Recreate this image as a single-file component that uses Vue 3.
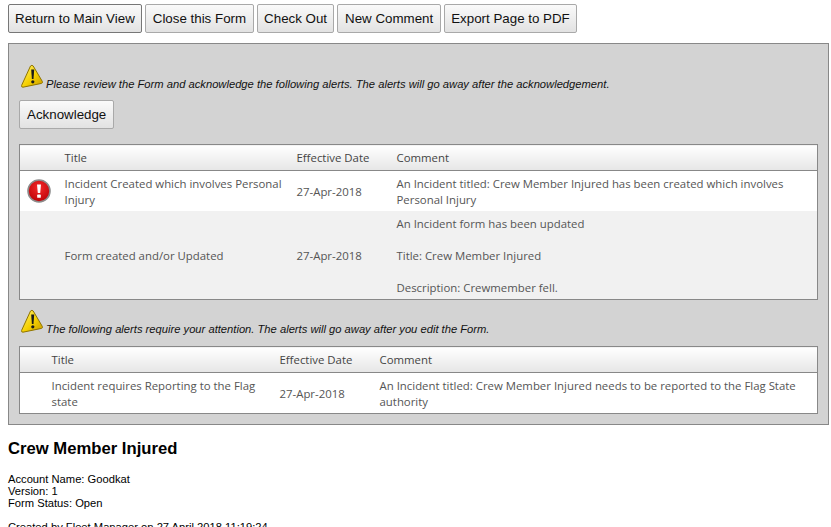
<template>
  <div class="page">
    <div class="toolbar">
      <button class="btn first">Return to Main View</button>
      <button class="btn">Close this Form</button>
      <button class="btn">Check Out</button>
      <button class="btn">New Comment</button>
      <button class="btn">Export Page to PDF</button>
    </div>

    <div class="panel">
      <div class="notice first-notice">
        <svg class="warn" width="24" height="24" viewBox="0 0 24 24">
          <defs>
            <linearGradient id="wg1" x1="0" y1="0" x2="1" y2="1">
              <stop offset="0" stop-color="#fff27a" />
              <stop offset="0.55" stop-color="#f5d000" />
              <stop offset="1" stop-color="#c79a00" />
            </linearGradient>
          </defs>
          <path d="M11.5 2 Q13 0.6 14.2 2 L23.3 17.4 Q24 19 22.5 19.4 L4 23.2 Q2.2 23.4 2.6 21.4Z" fill="url(#wg1)" stroke="#8f7400" stroke-width="1" />
          <path d="M12.2 5.5 L15.2 5.5 L14.5 15 L12.9 15Z" fill="#1a1a1a" />
          <circle cx="13.8" cy="17.8" r="1.6" fill="#1a1a1a" />
        </svg>
        <span> Please review the Form and acknowledge the following alerts. The alerts will go away after the acknowledgement.</span>
      </div>
      <button class="btn ack">Acknowledge</button>

      <table class="grid">
        <colgroup>
          <col style="width: 37px" />
          <col style="width: 232px" />
          <col style="width: 100px" />
          <col />
        </colgroup>
        <thead>
          <tr><th></th><th>Title</th><th>Effective Date</th><th>Comment</th></tr>
        </thead>
        <tbody>
          <tr>
            <td class="icon-cell">
              <svg width="24" height="24" viewBox="0 0 24 24">
                <defs>
                  <radialGradient id="eg1" cx="0.5" cy="0.35" r="0.7">
                    <stop offset="0" stop-color="#f52a2a" />
                    <stop offset="1" stop-color="#b80006" />
                  </radialGradient>
                </defs>
                <circle cx="12" cy="12" r="11" fill="url(#eg1)" stroke="#8c8c8c" stroke-width="1.6" />
                <path d="M10 5.5 L14 5.5 L13.2 14 L10.8 14Z" fill="#fff" />
                <rect x="10.2" y="15.6" width="3.6" height="3.2" rx="0.6" fill="#fff" />
              </svg>
            </td>
            <td>Incident Created which involves Personal Injury</td>
            <td>27-Apr-2018</td>
            <td>An Incident titled: Crew Member Injured has been created which involves Personal Injury</td>
          </tr>
          <tr class="alt">
            <td></td>
            <td>Form created and/or Updated</td>
            <td>27-Apr-2018</td>
            <td>An Incident form has been updated<br /><br />Title: Crew Member Injured<br /><br />Description: Crewmember fell.</td>
          </tr>
        </tbody>
      </table>

      <div class="notice second-notice">
        <svg class="warn" width="24" height="24" viewBox="0 0 24 24">
          <defs>
            <linearGradient id="wg2" x1="0" y1="0" x2="1" y2="1">
              <stop offset="0" stop-color="#fff27a" />
              <stop offset="0.55" stop-color="#f5d000" />
              <stop offset="1" stop-color="#c79a00" />
            </linearGradient>
          </defs>
          <path d="M11.5 2 Q13 0.6 14.2 2 L23.3 17.4 Q24 19 22.5 19.4 L4 23.2 Q2.2 23.4 2.6 21.4Z" fill="url(#wg2)" stroke="#8f7400" stroke-width="1" />
          <path d="M12.2 5.5 L15.2 5.5 L14.5 15 L12.9 15Z" fill="#1a1a1a" />
          <circle cx="13.8" cy="17.8" r="1.6" fill="#1a1a1a" />
        </svg>
        <span> The following alerts require your attention. The alerts will go away after you edit the Form.</span>
      </div>

      <table class="grid">
        <colgroup>
          <col style="width: 24px" />
          <col style="width: 228px" />
          <col style="width: 100px" />
          <col />
        </colgroup>
        <thead>
          <tr><th></th><th>Title</th><th>Effective Date</th><th>Comment</th></tr>
        </thead>
        <tbody>
          <tr>
            <td></td>
            <td>Incident requires Reporting to the Flag state</td>
            <td>27-Apr-2018</td>
            <td>An Incident titled: Crew Member Injured needs to be reported to the Flag State authority</td>
          </tr>
        </tbody>
      </table>
    </div>

    <h2 class="heading">Crew Member Injured</h2>
    <p class="meta">Account Name: Goodkat<br />Version: 1<br />Form Status: Open</p>
    <p class="meta">Created by Fleet Manager on 27 April 2018 11:19:24</p>
  </div>
</template>

<script setup>
</script>

<style>
html, body { overflow: hidden; }
</style>

<style scoped>
.page { padding: 4px 2px 0 8px; font-family: "Liberation Sans", Arial, sans-serif; color: #000; }
.toolbar { display: flex; gap: 3px; }
.btn {
  height: 29px; padding: 0 6px; font: 13.33px "Liberation Sans", Arial, sans-serif; color: #111;
  background: linear-gradient(#fafafa, #e2e2e2); border: 1px solid #a9a9a9; border-radius: 2px;
}
.btn:nth-child(2), .btn:nth-child(4) { padding: 0 7px; }
.btn.first { border-color: #777; }
.panel { margin-top: 10px; padding: 0 10px 10px; background: #d3d3d3; border: 1px solid #888; }
.notice { font-size: 11.2px; font-style: italic; color: #111; white-space: pre-wrap; }
.first-notice { padding-top: 20px; }
.second-notice { margin-top: 9px; }
.ack { display: block; margin-top: 10px; padding: 0 6px; }
.grid {
  width: 100%; margin-top: 15px; table-layout: fixed; border-collapse: collapse; border: 1px solid #888; background: #fff;
  font-family: "Open Sans", sans-serif; font-size: 11.4px; line-height: 16px; color: #555;
}
.second-notice + .grid { margin-top: 11px; }
.grid th {
  height: 24px; padding: 1px 8px 0; text-align: left; font-weight: 400; color: #444;
  background: linear-gradient(#ffffff, #e6e6e6); border-bottom: 1px solid #888;
}
.grid td { padding: 5px 2px 3px 8px; vertical-align: middle; }
.grid .alt td { background: #f1f1f1; }
.grid .icon-cell { padding: 0; text-align: center; }
.icon-cell svg { display: block; margin: 0 auto 0 7px; }
.heading { margin: 14px 0 0; font-size: 16.67px; line-height: 20px; font-weight: 700; }
.meta { margin: 12px 0 0; font-size: 11.2px; line-height: 12px; }
.heading + .meta { margin-top: 14px; }
</style>
